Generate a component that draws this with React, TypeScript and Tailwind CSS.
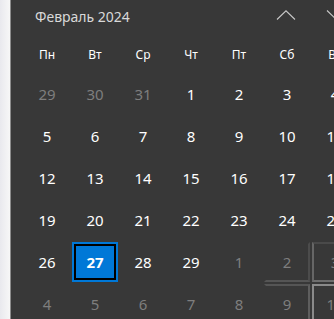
const weekdays = ["Пн", "Вт", "Ср", "Чт", "Пт", "Сб", "Вс"];

type Day = { n: number; muted?: boolean; selected?: boolean; reveal?: string };

const rows: Day[][] = [
  [{ n: 29, muted: true }, { n: 30, muted: true }, { n: 31, muted: true }, { n: 1 }, { n: 2 }, { n: 3 }, { n: 4 }],
  [{ n: 5 }, { n: 6 }, { n: 7 }, { n: 8 }, { n: 9 }, { n: 10 }, { n: 11 }],
  [{ n: 12 }, { n: 13 }, { n: 14 }, { n: 15 }, { n: 16 }, { n: 17 }, { n: 18 }],
  [{ n: 19 }, { n: 20 }, { n: 21 }, { n: 22 }, { n: 23 }, { n: 24 }, { n: 25 }],
  [
    { n: 26 },
    { n: 27, selected: true },
    { n: 28 },
    { n: 29 },
    { n: 1, muted: true },
    { n: 2, muted: true, reveal: "border-2 border-transparent border-r-[#4c4c4c] border-b-[#555555]" },
    { n: 3, muted: true, reveal: "border-2 border-[#4a4a4a] border-b-[#6e6e6e] border-l-[#666666]" },
  ],
  [
    { n: 4, muted: true },
    { n: 5, muted: true },
    { n: 6, muted: true },
    { n: 7, muted: true },
    { n: 8, muted: true },
    { n: 9, muted: true, reveal: "border-2 border-transparent border-t-[#555555] border-r-[#5e5e5e]" },
    { n: 10, muted: true, reveal: "border-2 border-[#8a8a8a]" },
  ],
];

const DayCell = ({ d }: { d: Day }) => {
  if (d.selected) {
    return (
      <div className="m-[1px] w-[46px] h-[40px] border-2 border-[#0078d7]">
        <div className="w-full h-full border-2 border-black bg-[#0078d7] flex items-center justify-center text-[15px] font-bold text-white">
          {d.n}
        </div>
      </div>
    );
  }
  return (
    <div
      className={`m-[1px] w-[46px] h-[40px] flex items-center justify-center text-[15px] ${
        d.muted ? "text-[#7e7e7e]" : "text-white"
      } ${d.reveal ?? ""}`}
    >
      {d.n}
    </div>
  );
};

const Chevron = ({ up }: { up?: boolean }) => (
  <svg width="20" height="10" viewBox="0 0 20 10" className="shrink-0">
    <path
      d={up ? "M1 9.5 L10 0.8 L19 9.5" : "M1 0.5 L10 9.2 L19 0.5"}
      fill="none"
      stroke="#c8c8c8"
      strokeWidth="1.1"
    />
  </svg>
);

export default function App() {
  return (
    <div className="w-[334px] h-[319px] overflow-hidden flex bg-[#383838] font-['Noto_Sans','Open_Sans',sans-serif]">
      <div className="w-[11px] shrink-0 bg-gradient-to-r from-[#e9e9ee] to-[#f7f7f7] border-r border-[#8c8c8c]" />
      <div className="w-[360px] shrink-0 bg-[#383838] pl-[12px]">
        <div className="h-[36px] flex items-start pt-[6px]">
          <span className="ml-[12px] text-[14px] text-[#d9d9d9]">Февраль 2024</span>
          <div className="ml-auto flex items-center gap-[30px] pt-[4px] mr-[25px]">
            <Chevron up />
            <Chevron />
          </div>
        </div>
        <div className="grid grid-cols-[repeat(7,48px)] h-[37px] items-center">
          {weekdays.map((w) => (
            <div key={w} className="text-center text-[12px] text-white">
              {w}
            </div>
          ))}
        </div>
        <div className="flex flex-col">
          {rows.map((r, i) => (
            <div key={i} className="flex">
              {r.map((d, j) => (
                <DayCell key={j} d={d} />
              ))}
            </div>
          ))}
        </div>
      </div>
    </div>
  );
}
